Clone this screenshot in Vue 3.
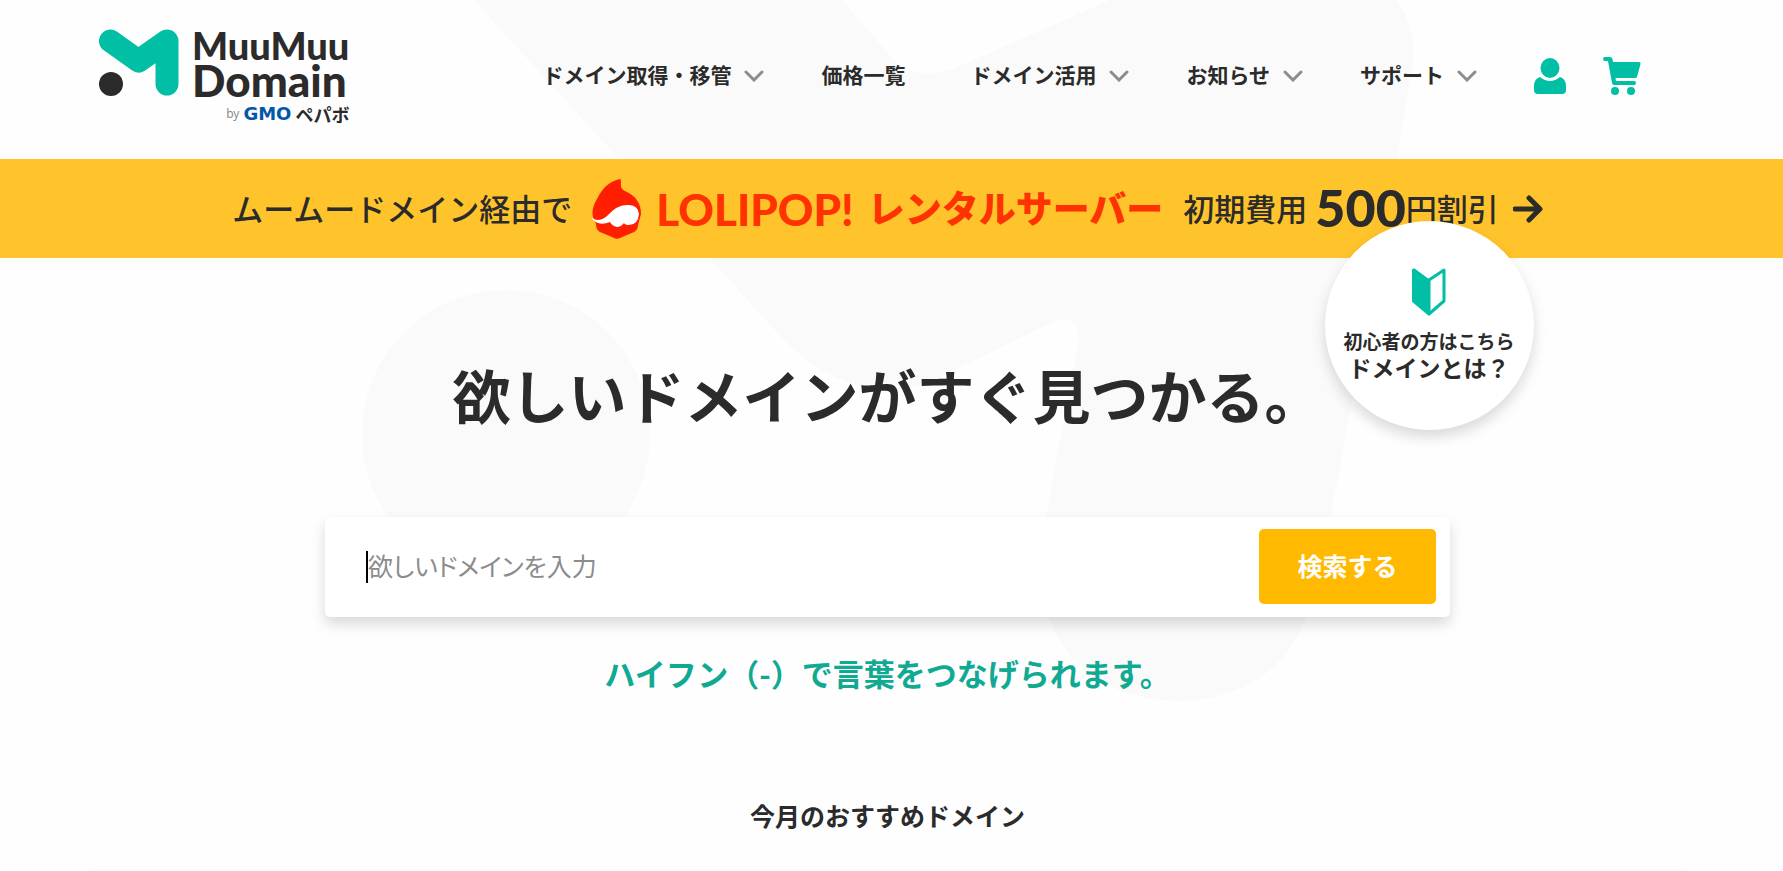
<script setup>
import { ref } from 'vue'

// Main navigation entries
const navItems = ref([
  { label: 'ドメイン取得・移管', hasMenu: true },
  { label: '価格一覧', hasMenu: false },
  { label: 'ドメイン活用', hasMenu: true },
  { label: 'お知らせ', hasMenu: true },
  { label: 'サポート', hasMenu: true }
])

const keyword = ref('') // Text typed into the search box

function search() {
  keyword.value = keyword.value.trim()
}
</script>

<template>
  <div class="page">
    <!-- Large pale logo behind the content -->
    <svg class="backdrop" width="1060" height="702" viewBox="360 0 1060 702" aria-hidden="true">
      <circle cx="506" cy="434" r="144" />
      <path d="M474 0 L785 341 Q840 396 905 388 Q925 385 969 363 L1053 322 Q1080 311 1078 343 L1046 517 Q1038 590 1049 618 Q1082 701 1183 701 Q1275 696 1306 618 Q1322 580 1332 510 L1397 159 L1412 72 Q1419 35 1397 0 H1110 L960 66 Q920 84 893 59 L842 0 Z" />
    </svg>

    <header class="header">
      <a class="logo" href="#">
        <span class="logo-main">
          <svg class="logo-mark" width="80" height="68" viewBox="0 0 80 68" aria-hidden="true">
            <path d="M11.5 12 L39.5 32 L68 12 V55" fill="none" stroke="#00bfa5" stroke-width="23" stroke-linecap="round" stroke-linejoin="round" />
            <circle cx="12" cy="55" r="12" fill="#2b2b2b" />
          </svg>
          <span class="logo-name">
            <span class="logo-line">MuuMuu</span>
            <span class="logo-line logo-line-large">Domain</span>
          </span>
        </span>
        <span class="logo-by">
          <span>by</span>
          <span class="gmo">GMO</span>
          <span class="pepabo">ペパボ</span>
        </span>
      </a>

      <nav class="nav">
        <a v-for="item in navItems" :key="item.label" href="#" :class="{ plain: !item.hasMenu }">
          <span class="nav-label">{{ item.label }}</span>
          <svg v-if="item.hasMenu" width="20" height="12" viewBox="0 0 20 12" aria-hidden="true">
            <path d="M2 2 L10 10 L18 2" fill="none" stroke="#8c8c8c" stroke-width="3" stroke-linecap="round" />
          </svg>
        </a>
      </nav>

      <div class="tools">
        <a href="#" aria-label="ログイン">
          <svg width="32" height="36" viewBox="0 0 32 36" fill="#00bfa5" aria-hidden="true">
            <ellipse cx="16" cy="10" rx="9.5" ry="10" />
            <path d="M6 19 Q16 27 26 19 Q32 21 32 28 V32 Q32 36 28 36 H4 Q0 36 0 32 V28 Q0 21 6 19 Z" />
          </svg>
        </a>
        <a href="#" aria-label="カート">
          <svg width="38" height="38" viewBox="0 0 38 38" fill="#00bfa5" aria-hidden="true">
            <path d="M2 0 H7 Q9 0 9.500 2 L10 5 H36 Q38 5 37.500 7 L34 20 Q33.500 21 32 21 H12.500 L13 24 H31 Q33 24 33 26 Q33 28 31 28 H11 Q9.500 28 9 26 L5 4 H2 Q0 4 0 2 Q0 0 2 0 Z" />
            <circle cx="12" cy="34" r="4" />
            <circle cx="28" cy="34" r="4" />
          </svg>
        </a>
      </div>
    </header>

    <a class="banner" href="#">
      <span class="banner-text">ムームードメイン経由で</span>
      <svg class="lolipop-icon" width="50" height="60" viewBox="0 0 50 60" aria-hidden="true">
        <path d="M28 0 Q29 0 29 3 Q28 10 33 12 Q49 19 49 35 L46 46 Q46 51 42 53 L28 59 Q24 61 20 58 L8 53 Q4 51 4 45 L1 38 Q-1 30 5 20 Q13 3 28 0 Z" fill="#ff1e00" />
        <path d="M0 39 Q7 44 15 37 Q25 26 34 26 Q46 25 47 35 Q46 46 37 46 Q33 46 32 44 Q29 48 25 48 Q20 47 18 43 Q11 46 6 44 Q1 42 0 39 Z" fill="#fff" />
      </svg>
      <span class="lolipop">LOLIPOP!</span>
      <span class="server">レンタルサーバー</span>
      <span class="banner-text">初期費用</span>
      <span class="amount">500</span>
      <span class="banner-text">円割引</span>
      <svg class="arrow" width="30" height="28" viewBox="0 0 30 28" aria-hidden="true">
        <path d="M2 14 H26 M16 3 L27 14 L16 25" fill="none" stroke="#2b2b2b" stroke-width="5" stroke-linecap="round" stroke-linejoin="round" />
      </svg>
    </a>

    <main class="hero">
      <a class="beginner" href="#">
        <svg width="34" height="48" viewBox="0 0 34 48" aria-hidden="true">
          <path d="M2 2 L17 13 V46 L1.500 33 V2 Z" fill="#00bfa5" stroke="#00bfa5" stroke-width="3" stroke-linejoin="round" />
          <path d="M17 12 L32 2 V33 L17 46" fill="none" stroke="#00bfa5" stroke-width="3" stroke-linejoin="round" />
        </svg>
        <span class="beginner-small">初心者の方はこちら</span>
        <span class="beginner-large">ドメインとは？</span>
      </a>

      <h1>欲しいドメインがすぐ見つかる。</h1>

      <form class="search" @submit.prevent="search">
        <span class="caret"></span>
        <input v-model="keyword" type="text" placeholder="欲しいドメインを入力" aria-label="欲しいドメインを入力" />
        <button type="submit">検索する</button>
      </form>

      <p class="hint">ハイフン（-）で言葉をつなげられます。</p>

      <h2>今月のおすすめドメイン</h2>
      <div class="panel"></div>
    </main>
  </div>
</template>

<style>
body {
  margin: 0;
  background: #fefefe;
}
</style>

<style scoped>
.page {
  position: relative;
  min-height: 100vh;
  overflow: hidden;
  color: #2b2b2b;
  font-family: "Noto Sans CJK JP", sans-serif;
}

a {
  color: inherit;
  text-decoration: none;
}

svg {
  display: block;
  flex-shrink: 0;
}

/* Backdrop */
.backdrop {
  position: absolute;
  top: 0;
  left: calc(50% - 532px);
  fill: #fafafa;
}

/* Header */
.header {
  position: relative;
  display: flex;
  align-items: center;
  padding: 28px 142px 35px 99px;
}

.logo {
  display: flex;
  flex-direction: column;
}

.logo-main {
  display: flex;
  align-items: center;
  gap: 13px;
  height: 70px;
}

.logo-name {
  display: flex;
  flex-direction: column;
  font-family: Lato, sans-serif;
  font-weight: 900;
}

.logo-line {
  font-size: 38px;
  line-height: 35px;
}

.logo-line-large {
  font-size: 44px;
}

.logo-by {
  display: flex;
  justify-content: flex-end;
  align-items: center;
  gap: 4px;
  height: 20px;
  padding-top: 6px;
  font-family: "Noto Sans", sans-serif;
  font-size: 12px;
  line-height: 20px;
  color: #8c8c8c;
}

.gmo {
  font-family: "DejaVu Sans", sans-serif;
  font-size: 18px;
  font-weight: bold;
  color: #0058a8;
}

.pepabo {
  font-family: "Noto Sans CJK JP", sans-serif;
  font-size: 18px;
  font-weight: bold;
  color: #2b2b2b;
}

.nav {
  display: flex;
  gap: 57px;
  margin-left: auto;
}

.nav a {
  display: flex;
  align-items: center;
  gap: 13px;
  font-size: 21px;
  font-weight: bold;
  line-height: 30px;
  white-space: nowrap;
}

.nav-label {
  padding-bottom: 4px;
}

.nav .plain {
  padding-right: 8px;
}

.tools {
  display: flex;
  align-items: center;
  gap: 37px;
  margin-left: 57px;
}

/* Campaign banner */
.banner {
  position: relative;
  display: flex;
  justify-content: center;
  align-items: center;
  height: 99px;
  padding-right: 8px;
  background: #ffc42b;
  font-size: 31px;
  font-weight: 500;
  white-space: nowrap;
}

.banner-text {
  padding-bottom: 3px;
}

.lolipop-icon {
  margin: 0 14px 0 20px;
}

.lolipop {
  margin-right: 14px;
  font-family: Lato, sans-serif;
  font-size: 44px;
  font-weight: 900;
  color: #ff3300;
}

.server {
  margin-right: 20px;
  padding-bottom: 3px;
  font-size: 37px;
  font-weight: 900;
  color: #ff3300;
}

.amount {
  margin-left: 8px;
  padding-bottom: 3px;
  font-family: Lato, sans-serif;
  font-size: 52px;
  font-weight: 900;
}

.arrow {
  margin-left: 14px;
}

/* Hero */
.hero {
  position: relative;
  display: flex;
  flex-direction: column;
  align-items: center;
  padding: 96px 8px 0 0;
}

.beginner {
  position: absolute;
  top: -37px;
  left: calc(50% + 433px);
  display: flex;
  flex-direction: column;
  align-items: center;
  box-sizing: border-box;
  width: 209px;
  height: 209px;
  padding-top: 47px;
  border-radius: 50%;
  background: #fff;
  box-shadow: 0 7px 14px rgba(0, 0, 0, 0.15);
  font-weight: bold;
  line-height: 27px;
  white-space: nowrap;
}

.beginner-small {
  margin-top: 11px;
  font-size: 19px;
}

.beginner-large {
  font-size: 23px;
}

h1 {
  margin: 0;
  font-size: 58px;
  line-height: 80px;
}

.search {
  display: flex;
  align-items: center;
  box-sizing: border-box;
  width: 100%;
  max-width: 1125px;
  height: 100px;
  margin-top: 83px;
  padding: 0 14px 1px 41px;
  border-radius: 5px;
  background: #fff;
  box-shadow: 0 7px 14px rgba(0, 0, 0, 0.15);
}

.caret {
  width: 2px;
  height: 32px;
  background: #000;
}

.search input {
  flex: 1;
  min-width: 0;
  padding: 0 0 4px;
  border: none;
  outline: none;
  background: transparent;
  font-family: inherit;
  font-size: 25px;
  font-feature-settings: "palt";
}

.search input::placeholder {
  color: #8c8c8c;
}

.search button {
  width: 177px;
  height: 75px;
  padding: 0 0 4px;
  border: none;
  border-radius: 5px;
  background: #ffb900;
  color: #fff;
  font-family: inherit;
  font-size: 25px;
  font-weight: bold;
  cursor: pointer;
}

.hint {
  margin: 36px 0 0;
  font-size: 31px;
  font-weight: bold;
  line-height: 40px;
  color: #10a992;
}

h2 {
  margin: 102px 0 36px;
  font-size: 25px;
  line-height: 40px;
}

.panel {
  width: 90%;
  height: 1px;
  box-shadow: 0 0 10px rgba(0, 0, 0, 0.1);
}
</style>
